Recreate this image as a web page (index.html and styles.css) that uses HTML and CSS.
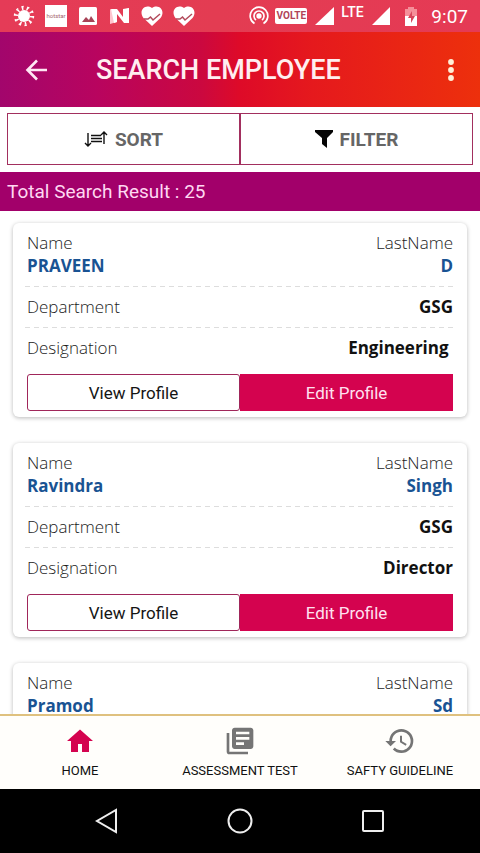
FILE: index.html
```html
<!DOCTYPE html>
<html lang="en">
<head>
<meta charset="utf-8">
<meta name="viewport" content="width=device-width, initial-scale=1">
<title>Search Employee</title>
<link rel="stylesheet" href="styles.css">
</head>
<body>
<div class="status">
  <div class="notices">
    <svg viewBox="0 0 22 22" width="22" height="22"><circle cx="11" cy="11" r="6" fill="#fff"/><circle cx="11" cy="11" r="7.5" fill="none" stroke="#fff" stroke-width="3" stroke-dasharray="1.5 3.21"/><circle cx="11" cy="11" r="9.5" fill="none" stroke="#fff" stroke-width="1.4" stroke-dasharray="2.4 3.57"/></svg>
    <span class="badge-app">hotstar</span>
    <svg viewBox="0 0 22 22" width="22" height="22"><rect x="2" y="2" width="18" height="18" rx="1.5" fill="#fff"/><path d="M5 17l4-5 3 3 2-4 4 6z" fill="#a84357"/></svg>
    <svg viewBox="0 0 22 22" width="22" height="22"><path d="M1 4l7 4v9l-7 2zM14 5l6-2v15l-6-4z" fill="#ffc4ce"/><path d="M2 4h6l6 8V4l6-1v15h-5L8 9v8l-3 1z" fill="#fff"/></svg>
    <svg viewBox="0 0 24 24" width="24" height="24"><path d="M12 22 3.500 14C-2 7 5-1 12 4 19-1 26 7 20.500 14z" fill="#fff"/><path d="M4 15h4l2.500-2 2.500 3 7-6" fill="none" stroke="#b34b5c" stroke-width="1.500"/></svg>
    <svg viewBox="0 0 24 24" width="24" height="24"><path d="M12 22 3.500 14C-2 7 5-1 12 4 19-1 26 7 20.500 14z" fill="#fff"/><path d="M4 15h4l2.500-2 2.500 3 7-6" fill="none" stroke="#b34b5c" stroke-width="1.500"/></svg>
  </div>
  <div class="radios">
    <svg viewBox="0 0 20 20" width="20" height="20" fill="none" stroke="#fff" stroke-width="1.700"><path d="M5.500 17.500a8.800 8.800 0 1 1 9 0M7 14a5 5 0 1 1 6 0"/><circle cx="10" cy="10" r="1.800" fill="#fff"/></svg>
    <span class="volte">VOLTE</span>
    <svg viewBox="0 0 22 20" width="22" height="20"><path d="M2 19h19V1z" fill="#fff"/></svg>
    <span class="lte">LTE</span>
    <svg viewBox="0 0 20 20" width="20" height="20"><path d="M1 19h18V1z" fill="#fff"/></svg>
    <svg viewBox="0 0 28 22" width="28" height="22"><path d="M11 2h6v2h3v8H8V4h3z" fill="#f58f99"/><path d="M8 11h12v10H8z" fill="#fff"/><path d="M15 6l-4 7h3v5l4-7h-3z" fill="#d8455a"/></svg>
    <time class="clock">9:07</time>
  </div>
</div>
<header class="appbar">
  <button class="icon-btn" aria-label="Back"><svg viewBox="0 0 24 24" width="24" height="24" fill="none" stroke="#ffe6f4" stroke-width="2.600"><path d="M23 12H4M13 2.500 3.500 12l9.500 9.500"/></svg></button>
  <h1>SEARCH EMPLOYEE</h1>
  <button class="icon-btn" aria-label="More options"><svg viewBox="0 0 24 24" width="24" height="24" fill="#fff0d8"><circle cx="12" cy="4" r="2.900"/><circle cx="12" cy="12" r="2.900"/><circle cx="12" cy="20" r="2.900"/></svg></button>
</header>
<div class="tools">
  <button class="tool"><svg viewBox="0 0 24 18" width="24" height="18" fill="none" stroke="#111" stroke-width="1.400"><path d="M4 3v13M1 13l3 3 3-3M20 14V2M17 5l3-3 3 3M7 5.500h10M7 8.500h11M7 11.500h11"/></svg>SORT</button>
  <button class="tool"><svg viewBox="0 0 18 18" width="18" height="18" fill="#050505"><path d="M0 0h18v2l-6 6v10l-5-4V8L0 2z"/></svg>FILTER</button>
</div>
<p class="total">Total Search Result : 25</p>
<main class="list">
  <article class="card">
    <div class="names"><p>Name<b>PRAVEEN</b></p><p>LastName<b>D</b></p></div>
    <div class="row"><span>Department</span><strong>GSG</strong></div>
    <div class="row"><span>Designation</span><strong class="spaced">Engineering </strong></div>
    <div class="actions"><button class="view">View Profile</button><button class="edit">Edit Profile</button></div>
  </article>
  <article class="card">
    <div class="names"><p>Name<b>Ravindra</b></p><p>LastName<b>Singh</b></p></div>
    <div class="row"><span>Department</span><strong>GSG</strong></div>
    <div class="row"><span>Designation</span><strong>Director</strong></div>
    <div class="actions"><button class="view">View Profile</button><button class="edit">Edit Profile</button></div>
  </article>
  <article class="card">
    <div class="names"><p>Name<b>Pramod</b></p><p>LastName<b>Sd</b></p></div>
  </article>
</main>
<nav class="tabs">
  <a href="#home"><svg viewBox="0 0 32 32" width="32" height="32" fill="#d4034f"><path d="M16 4.500 3 16h4v11h7v-8h4v8h7V16h4z"/></svg>HOME</a>
  <a href="#test"><svg viewBox="0 0 24 24" width="32" height="32" fill="#757575"><path d="M4 6H2v14c0 1.100.9 2 2 2h14v-2H4V6zm16-4H8c-1.100 0-2 .9-2 2v12c0 1.100.9 2 2 2h12c1.100 0 2-.9 2-2V4c0-1.100-.9-2-2-2zm-1 9H9V9h10v2zm-4 4H9v-2h6v2zm4-8H9V5h10v2z"/></svg>ASSESSMENT TEST</a>
  <a href="#safety"><svg viewBox="0 0 24 24" width="32" height="32" fill="#757575"><path d="M13 3a9 9 0 0 0-9 9H1l3.890 3.890.07.14L9 12H6c0-3.870 3.130-7 7-7s7 3.130 7 7-3.130 7-7 7c-1.930 0-3.680-.79-4.940-2.060l-1.420 1.420A8.950 8.950 0 0 0 13 21a9 9 0 0 0 0-18zm-1 5v5l4.280 2.540.72-1.210-3.500-2.080V8H12z"/></svg>SAFTY GUIDELINE</a>
</nav>
<div class="system">
  <button aria-label="System back"><svg viewBox="0 0 28 28" width="28" height="28"><path d="M23 3v22L4 14z"/></svg></button>
  <button aria-label="System home"><svg viewBox="0 0 28 28" width="28" height="28"><circle cx="14" cy="14" r="11.500"/></svg></button>
  <button aria-label="Recent apps"><svg viewBox="0 0 28 28" width="28" height="28"><rect x="4" y="4" width="20" height="20" rx="1"/></svg></button>
</div>
</body>
</html>
```
FILE: styles.css
```css
* { box-sizing: border-box; }
body {
  margin: 0;
  height: 100vh;
  display: flex;
  flex-direction: column;
  overflow: hidden;
  background: #fff;
  color: #222;
  font-family: Roboto, "Liberation Sans", sans-serif;
}
h1, p { margin: 0; font-weight: 400; }
button { margin: 0; padding: 0; border: 0; background: none; color: inherit; font: inherit; }
svg { display: block; flex: none; }

.status {
  display: flex;
  justify-content: space-between;
  flex: none;
  height: 32px;
  padding: 0 12px 0 8px;
  background: linear-gradient(90deg, #e53b57, #e33c52 45%, #e53a55);
  color: #fff;
}
.notices { display: grid; grid-template-columns: repeat(6, 32px); align-items: center; justify-items: center; }
.badge-app {
  width: 22px;
  height: 22px;
  background: #fff;
  color: #a5626c;
  font-size: 6px;
  line-height: 22px;
  text-align: center;
}
.radios { display: flex; align-items: center; gap: 6px; }
.volte {
  width: 32px;
  height: 16px;
  border-radius: 2px;
  background: #fff;
  color: #b04458;
  font-size: 10px;
  font-weight: 700;
  line-height: 16px;
  text-align: center;
}
.lte { width: 24px; font-size: 14px; line-height: 16px; font-weight: 500; align-self: flex-start; padding-top: 4px; }
.clock { font-size: 19px; }

.appbar {
  display: flex;
  align-items: center;
  flex: none;
  height: 75px;
  padding: 0 17px 0 24px;
  background: linear-gradient(90deg, #a2066c 0%, #b8045f 20%, #cb083f 42%, #de0a28 50%, #e5191d 65%, #ed300c 100%);
}
.appbar h1 { flex: 1; margin-left: 48px; color: #ffeef0; font-size: 27px; font-weight: 500; line-height: 32px; }

.tools { display: flex; flex: none; padding: 6px 7px 7px; }
.tool {
  display: flex;
  flex: 1;
  align-items: center;
  justify-content: center;
  gap: 7px;
  height: 52px;
  border: 1px solid #a22f5e;
  color: #666;
  font-size: 19px;
  font-weight: 700;
}

.total { flex: none; padding: 0 7px; background: #a2006a; color: #ffd8f2; font-size: 19px; line-height: 39px; }

.list {
  display: flex;
  flex: 1;
  flex-direction: column;
  gap: 26px;
  min-height: 0;
  overflow: hidden;
  padding: 12px 13px 0;
}
.card {
  flex: none;
  padding: 8px 14px 6px;
  border-radius: 6px;
  background: #fff;
  box-shadow: 0 1px 4px rgba(0, 0, 0, .28);
  color: #1c1c1c;
  font-family: "Open Sans", "Noto Sans", sans-serif;
  font-size: 17px;
  font-weight: 300;
}
.names { display: flex; justify-content: space-between; height: 55px; line-height: 23px; }
.names p { font-weight: 300; }
.names p:last-child { text-align: right; }
.names b { display: block; color: #195393; font-weight: 700; }
.row {
  display: flex;
  align-items: center;
  justify-content: space-between;
  height: 41px;
  margin: 0 -2px;
  padding: 0 2px;
  background: repeating-linear-gradient(90deg, #ddd 0 5px, transparent 5px 9px) top / 100% 1px no-repeat;
}
.row strong { color: #111; font-weight: 700; }
.row .spaced { white-space: pre; }
.actions {
  display: grid;
  grid-template-columns: 1fr 1fr;
  height: 37px;
  margin-top: 6px;
  font-family: Roboto, "Liberation Sans", sans-serif;
  font-size: 17px;
  font-weight: 400;
}
.view { border: 1px solid #a0265a; border-radius: 3px; color: #151515; }
.edit { background: #d4034f; color: #ffe0ef; }

.tabs {
  display: grid;
  grid-template-columns: repeat(3, 1fr);
  flex: none;
  height: 75px;
  border-top: 2px solid #dfc17f;
  background: #fffefb;
}
.tabs a {
  display: flex;
  flex-direction: column;
  align-items: center;
  gap: 5px;
  padding-top: 9px;
  color: #111;
  font-size: 13px;
  line-height: 18px;
  text-decoration: none;
}

.system { display: flex; align-items: center; justify-content: center; gap: 105px; flex: none; height: 64px; background: #000; }
.system svg { fill: none; stroke: #eee; stroke-width: 2; }
```
